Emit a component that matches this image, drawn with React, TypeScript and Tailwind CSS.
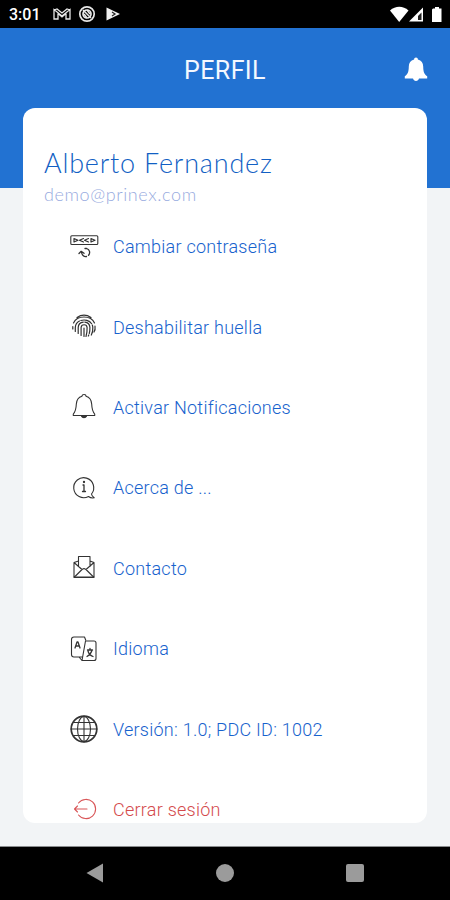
import { ReactNode } from "react";

interface MenuItem {
    label: string;
    icon: ReactNode;
    danger?: boolean;
}

const items: MenuItem[] = [
    { label: "Cambiar contraseña", icon: <PasswordIcon /> },
    { label: "Deshabilitar huella", icon: <FingerprintIcon /> },
    { label: "Activar Notificaciones", icon: <BellOutlineIcon /> },
    { label: "Acerca de ...", icon: <InfoIcon /> },
    { label: "Contacto", icon: <MailIcon /> },
    { label: "Idioma", icon: <LanguageIcon /> },
    { label: "Versión: 1.0; PDC ID: 1002", icon: <GlobeIcon /> },
    { label: "Cerrar sesión", icon: <LogoutIcon />, danger: true },
];

export default function App() {
    return (
        <div className="flex h-[900px] w-[450px] flex-col overflow-hidden bg-[#f2f4f6] font-['Roboto',sans-serif]">
            <StatusBar />
            <header className="h-40 shrink-0 bg-[#2272d2]">
                <div className="grid h-20 grid-cols-[1fr_auto_1fr] items-center px-[22px] pt-1">
                    <span />
                    <h1 className="text-[25px] leading-none tracking-[0.4px] text-[#f4f8ff]">PERFIL</h1>
                    <BellIcon />
                </div>
            </header>
            <main className="mx-[23px] -mt-20 h-[715px] w-[404px] shrink-0 overflow-hidden rounded-xl bg-white">
                <div className="h-[98.5px] pt-[37px] pl-[21px] font-['Lato',sans-serif]">
                    <h2 className="text-[27px] leading-9 font-light tracking-[0.8px] text-[#125fc4]">Alberto Fernandez</h2>
                    <p className="text-[18px] leading-[26px] font-light tracking-[0.6px] text-[#98abe0]">demo@prinex.com</p>
                </div>
                <ul>
                    {items.map((item) => (
                        <li key={item.label} className="flex h-[80.4px] items-center gap-[15px] pl-[47px]">
                            {item.icon}
                            <span
                                className={`pt-px text-[18px] leading-6 font-light tracking-[0.25px] ${item.danger ? "text-[#d44a4c]" : "text-[#1762cd]"}`}
                            >
                                {item.label}
                            </span>
                        </li>
                    ))}
                </ul>
            </main>
            <NavigationBar />
        </div>
    );
}

function StatusBar() {
    return (
        <div className="flex h-7 shrink-0 items-center bg-black pr-[8px] pl-[9px] text-white">
            <span className="w-[44px] pt-0.5 text-[16px] leading-none font-medium">3:01</span>
            <svg width="68" height="18" viewBox="0 0 68 18" fill="none" stroke="#e8e8e8">
                <path d="M1 14V4.500L9 11l8-6.500V14h-4V8.500L9 12 5 8.500V14zM1 5l3-1 5 4 5-4 3 1" strokeWidth="1.300" />
                <circle cx="34" cy="9" r="7.200" strokeWidth="1.700" />
                <circle cx="34" cy="9" r="4" strokeWidth="1.700" />
                <path d="M30 5l8 8M34 5l3 4M31 9l3 4" strokeWidth="1.500" />
                <path d="M53.500 2.500l13.500 6.500-13.500 6.500z" fill="#f0f0f0" stroke="none" />
                <path d="M59 7l3 2-3 2" stroke="#222" strokeWidth="1.200" />
            </svg>
            <svg className="ml-auto" width="52" height="18" viewBox="0 0 52 18" fill="#fff">
                <path d="M0 5.500C5.500.6 13 .6 18.500 5.500L9.200 17z" />
                <path d="M33 2.500V16.500H19z" />
                <path d="M31.500 7.500v7.500H28v-4z" fill="#222" />
                <path d="M43 3.500h2V2h4v1.500h2.500V17H42V4.500z" />
            </svg>
        </div>
    );
}

function NavigationBar() {
    return (
        <nav className="mt-auto flex h-[54px] shrink-0 items-center justify-between border-t border-[#8a8c8e] bg-black px-[86px] pb-px">
            <svg width="18" height="20" viewBox="0 0 18 20" fill="#9b9b9b">
                <path d="M17 .5v19L.5 10z" />
            </svg>
            <span className="h-[18px] w-[18px] rounded-full bg-[#9b9b9b]" />
            <span className="h-[18px] w-[18px] rounded-[2px] bg-[#9b9b9b]" />
        </nav>
    );
}

function BellIcon() {
    return (
        <svg className="justify-self-end" width="24" height="26" viewBox="0 0 24 26" fill="#fff">
            <path d="M12 .5c1.200 0 1.900.8 1.900 2 3.600.9 5.200 3.500 5.300 7 .1 5 .8 7.500 4 9.800v2.200H15c-.4 1.600-1.500 2.500-3 2.500s-2.600-.9-3-2.500H.8v-2.200c3.200-2.300 3.900-4.800 4-9.800.1-3.500 1.700-6.100 5.300-7 0-1.200.7-2 1.900-2z" />
        </svg>
    );
}

function LineIcon({ children, color = "#333" }: { children: ReactNode; color?: string }) {
    return (
        <svg
            width="28"
            height="28"
            viewBox="0 0 28 28"
            fill="none"
            stroke={color}
            strokeWidth="1.1"
            strokeLinecap="round"
            strokeLinejoin="round"
            className="shrink-0 overflow-visible"
        >
            {children}
        </svg>
    );
}

function PasswordIcon() {
    return (
        <LineIcon>
            <rect x=".8" y="2.800" width="27" height="8.700" rx="1" />
            <path d="M4 5.500v3.500M4 5.500l4 1.700L4 9M13.500 5.500l-4 1.700 4 1.800M18.500 5.500l-4 1.700 4 1.800M21 5.500l4 1.700L21 9z" strokeWidth="1.200" />
            <path d="M9 20.500l2.200-2.200 2.800 2M11.500 19c.2 3 2.300 5 5 4.500M18.500 22.300c2-2.200 1.300-5.800-1.800-6.800H15" strokeWidth="1.300" />
        </LineIcon>
    );
}

function FingerprintIcon() {
    return (
        <LineIcon>
            <g strokeWidth="1.200">
                <path d="M7 4.500c4.500-3 9.500-3 14 0M3.500 10c3.500-8 17.500-8 21 0M2.800 16v-2.500M25 13c.4 2.500 0 4.500-1 6" />
                <path d="M5.300 18.500v-4c.5-10 17-10 17.500 0 .2 3-.3 5.500-1.500 7.500" strokeDasharray="12 1.500" />
                <path d="M8.200 20.500v-6c.3-7.200 11.400-7.200 11.700 0 .1 3.500-.5 6.300-1.600 8.500" strokeDasharray="14 1.500" />
                <path d="M11.100 22.500v-8c.2-3.700 5.800-3.700 6 0 .1 4-.3 6.500-1.100 9M14 15v8.500" />
            </g>
        </LineIcon>
    );
}

function BellOutlineIcon() {
    return (
        <LineIcon>
            <path d="M12 3.300c0-2.500 4-2.500 4 0 3.800 1 5.500 4 5.700 8 .2 5 .7 7.200 3 9.700v1.500H3.300V21c2.300-2.500 2.800-4.700 3-9.700.2-4 1.900-7 5.700-8z" />
            <path d="M11.500 23.300h5c-1 1.800-4 1.800-5 0z" fill="#333" />
        </LineIcon>
    );
}

function InfoIcon() {
    return (
        <LineIcon>
            <path d="M21.500 20A10 10 0 1 0 18.500 22.500c1.700 1.300 3.500 1.700 5.700 1.300-1.600-1-2.500-2.200-2.700-3.800z" />
            <path d="M13 11h1v6.500M12.500 17.500h3" strokeWidth="1.300" />
            <circle cx="14" cy="8" r=".6" fill="#333" />
        </LineIcon>
    );
}

function MailIcon() {
    return (
        <LineIcon>
            <path d="M8.500 12.500V2.500H20v10M4 8.500v15h20v-15M4 8.500l4.500-1.500M24 8.500L20 7M4 8.500l8 7 2-1 2 1 8-7M4 23.500l8-8M16 15.500l8 8" />
            <path d="M6 23.300h16" strokeWidth="1.600" />
        </LineIcon>
    );
}

function LanguageIcon() {
    return (
        <LineIcon>
            <path d="M12 22H4c-1.700 0-2.500-.8-2.500-2.500v-15C1.500 2.800 2.300 2 4 2h10.500l1.200 3M15.500 6H24c1.400 0 2 .7 2 2v15.500c0 1.300-.7 2-2 2H12L15.500 6zM12 25.500L9 22" />
            <path d="M5 13l2-6h1l2 6M5.700 11h3.600" strokeWidth="1.300" />
            <path d="M17.500 15h5M20 13.500V15M22 15c-.6 3-2.500 5-5 6.500M18 16c.5 2 2.500 4.500 5 5.500" strokeWidth="1.300" />
        </LineIcon>
    );
}

function GlobeIcon() {
    return (
        <LineIcon>
            <circle cx="14" cy="14" r="12.800" strokeWidth="1.700" />
            <ellipse cx="14" cy="14" rx="6.500" ry="12.500" />
            <path d="M14 1v26M1 14h26M3.500 7.500h21M3.500 20.500h21" />
        </LineIcon>
    );
}

function LogoutIcon() {
    return (
        <LineIcon color="#d95759">
            <path d="M8.500 8a9.600 9.600 0 1 1 0 12M4.500 14H17M7.500 11l-3 3 3 3" />
        </LineIcon>
    );
}
